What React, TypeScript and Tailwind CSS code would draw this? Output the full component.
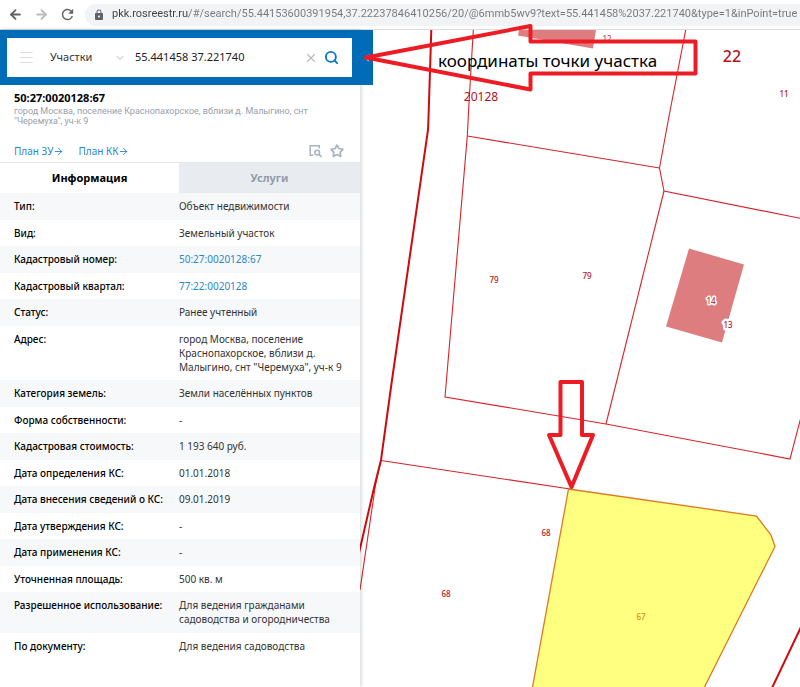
import React, { useState } from 'react';
import { ArrowLeft, ArrowRight, ChevronDown, ChevronLeft, Menu, Search, Star, X } from 'lucide-react';
import { MdLock, MdRefresh } from 'react-icons/md';

interface ParcelField {
  label: string;
  value: string;
  link?: boolean;
}

interface MapLabel {
  x: number;
  y: number;
  text: string;
  className: string;
}

const fields: ParcelField[] = [
  { label: 'Тип:', value: 'Объект недвижимости' },
  { label: 'Вид:', value: 'Земельный участок' },
  { label: 'Кадастровый номер:', value: '50:27:0020128:67', link: true },
  { label: 'Кадастровый квартал:', value: '77:22:0020128', link: true },
  { label: 'Статус:', value: 'Ранее учтенный' },
  { label: 'Адрес:', value: 'город Москва, поселение Краснопахорское, вблизи д. Малыгино, снт "Черемуха", уч-к 9' },
  { label: 'Категория земель:', value: 'Земли населённых пунктов' },
  { label: 'Форма собственности:', value: '-' },
  { label: 'Кадастровая стоимость:', value: '1 193 640 руб.' },
  { label: 'Дата определения КС:', value: '01.01.2018' },
  { label: 'Дата внесения сведений о КС:', value: '09.01.2019' },
  { label: 'Дата утверждения КС:', value: '-' },
  { label: 'Дата применения КС:', value: '-' },
  { label: 'Уточненная площадь:', value: '500 кв. м' },
  { label: 'Разрешенное использование:', value: 'Для ведения гражданами садоводства и огородничества' },
  { label: 'По документу:', value: 'Для ведения садоводства' },
];

const mapLabels: MapLabel[] = [
  { x: 732, y: 62, text: '22', className: 'fill-[#b5121b] text-[16px] font-medium' },
  { x: 481, y: 101, text: '20128', className: 'fill-[#b5121b] text-[12px]' },
  { x: 607, y: 42, text: '12', className: 'fill-[#b5323a] text-[8px]' },
  { x: 784, y: 97, text: '11', className: 'fill-[#b5121b] text-[8px] font-medium' },
  { x: 494, y: 283, text: '79', className: 'fill-[#b5121b] text-[8px] font-medium' },
  { x: 587, y: 279, text: '79', className: 'fill-[#b5121b] text-[8px] font-medium' },
  { x: 711, y: 304, text: '14', className: 'fill-[#b5323a] text-[8px] font-medium' },
  { x: 728, y: 328, text: '13', className: 'fill-[#b5121b] text-[8px] font-medium' },
  { x: 546, y: 536, text: '68', className: 'fill-[#b5121b] text-[8px] font-medium' },
  { x: 446, y: 597, text: '68', className: 'fill-[#b5121b] text-[8px] font-medium' },
  { x: 641, y: 620, text: '67', className: 'fill-[#d98a1c] text-[8px] font-medium' },
];

const PAGE_URL =
  'pkk.rosreestr.ru/#/search/55.44153600391954,37.22237846410256/20/@6mmb5wv9?text=55.441458%2037.221740&type=1&inPoint=true';

const BrowserBar: React.FC = () => (
  <header className="flex h-[30px] items-center overflow-hidden border-b border-[#d9dbdd] bg-white pl-[8px] text-[#5f6368]">
    <button type="button" aria-label="Назад" className="mr-[11px]">
      <ArrowLeft size={15} strokeWidth={3} />
    </button>
    <button type="button" aria-label="Вперёд" className="mr-[10px] text-[#b9bbbe]">
      <ArrowRight size={15} strokeWidth={3} />
    </button>
    <button type="button" aria-label="Обновить" className="mr-[9px]">
      <MdRefresh size={17} />
    </button>
    <div className="flex h-[22px] min-w-0 flex-1 items-center gap-[7px] rounded-l-full bg-[#f1f3f4] pl-[8px]">
      <MdLock size={12} className="shrink-0" />
      <input
        aria-label="Адрес страницы"
        readOnly
        value={PAGE_URL}
        className="min-w-0 flex-1 bg-[linear-gradient(90deg,#3c4043_77px,#74787c_77px)] bg-clip-text font-['Roboto',sans-serif] text-[11px] text-transparent outline-none"
      />
    </div>
  </header>
);

const SearchBar: React.FC = () => {
  const [query, setQuery] = useState('55.441458 37.221740');

  return (
    <div className="relative flex h-[55px] w-[373px] items-center bg-[#006cb7] pl-[7px]">
      <form className="flex h-[39px] w-[345px] items-center bg-white pl-[11px] pr-[13px]" onSubmit={e => e.preventDefault()}>
        <button type="button" aria-label="Меню" className="text-[#c8cbcf]">
          <Menu size={17} strokeWidth={1} />
        </button>
        <div className="relative ml-[15px] flex items-center">
          <select
            aria-label="Слой поиска"
            className="w-[76px] appearance-none bg-transparent text-[11px] text-[#333] outline-none"
          >
            <option>Участки</option>
          </select>
          <ChevronDown size={12} strokeWidth={2} className="pointer-events-none absolute right-0 text-[#b5b9be]" />
        </div>
        <input
          aria-label="Поиск"
          value={query}
          onChange={e => setQuery(e.target.value)}
          className="ml-[9px] min-w-0 flex-1 text-[11px] text-[#222] outline-none"
        />
        <button type="button" aria-label="Очистить" onClick={() => setQuery('')} className="mr-[6px] text-[#b9bdc2]">
          <X size={14} strokeWidth={2} />
        </button>
        <button type="submit" aria-label="Найти" className="text-[#0a75c2]">
          <Search size={15} strokeWidth={3} />
        </button>
      </form>
      <button type="button" aria-label="Свернуть панель" className="ml-auto text-white">
        <ChevronLeft size={12} strokeWidth={2} />
      </button>
    </div>
  );
};

const ParcelSummary: React.FC = () => (
  <section className="flex h-[78px] flex-col border-b border-[#e4e7ea] pl-[14px] pr-[16px] pt-[5px]">
    <h1 className="text-[11px] font-bold leading-[16px] text-black">50:27:0020128:67</h1>
    <p className="w-[300px] font-['Roboto',sans-serif] text-[9px] leading-[10px] text-[#98a1ad]">
      город Москва, поселение Краснопахорское, вблизи д. Малыгино, снт "Черемуха", уч-к 9
    </p>
    <div className="mt-auto flex items-center pb-[4px] text-[10px] leading-[14px] text-[#2a88c9]">
      <a href="#plan-zu" className="mr-[14px] flex items-center">
        План ЗУ <ArrowRight size={11} strokeWidth={2} />
      </a>
      <a href="#plan-kk" className="flex items-center">
        План КК <ArrowRight size={11} strokeWidth={2} />
      </a>
      <button type="button" aria-label="Показать на карте" className="ml-auto mr-[8px] text-[#a9b3c1]">
        <svg width="14" height="14" viewBox="0 0 14 14" fill="none" stroke="currentColor" strokeWidth="1.5">
          <path d="M5.5 11.2H2.2V1.7H11.3V4.5" />
          <circle cx="9.2" cy="8.6" r="2.4" />
          <path d="M11 10.4L13.6 13" />
        </svg>
      </button>
      <button type="button" aria-label="В избранное" className="text-[#a9b3c1]">
        <Star size={14} strokeWidth={3} />
      </button>
    </div>
  </section>
);

const ParcelTable: React.FC = () => (
  <table className="w-full table-fixed border-collapse text-left text-[10px] leading-[14px]">
    <colgroup>
      <col className="w-[179px]" />
      <col />
    </colgroup>
    <tbody>
      {fields.map(field => (
        <tr key={field.label} className="border-[#f6f8fa] odd:border-b odd:bg-[#f6f8fa]">
          <th scope="row" className="whitespace-nowrap py-[6px] pl-[14px] align-top font-medium text-black">
            {field.label}
          </th>
          <td className="py-[6px] pr-[16px] align-top text-[#333]">
            {field.link ? <a href="#parcel" className="text-[#2a88c9]">{field.value}</a> : field.value}
          </td>
        </tr>
      ))}
    </tbody>
  </table>
);

const Sidebar: React.FC = () => {
  const [tab, setTab] = useState<'info' | 'services'>('info');

  return (
    <aside className="relative z-10 w-[360px] shrink-0 bg-white shadow-[1px_0_4px_rgba(0,0,0,0.18)]">
      <SearchBar />
      <ParcelSummary />
      <div role="tablist" className="flex h-[30px] text-[11px] font-bold">
        <button
          type="button"
          role="tab"
          aria-selected={tab === 'info'}
          onClick={() => setTab('info')}
          className={`w-[179px] ${tab === 'info' ? 'bg-white text-black' : 'bg-[#e8ecf1] text-[#919ba9]'}`}
        >
          Информация
        </button>
        <button
          type="button"
          role="tab"
          aria-selected={tab === 'services'}
          onClick={() => setTab('services')}
          className={`flex-1 ${tab === 'services' ? 'bg-white text-black' : 'bg-[#e8ecf1] text-[#919ba9]'}`}
        >
          Услуги
        </button>
      </div>
      {tab === 'info' && <ParcelTable />}
    </aside>
  );
};

const CadastralMap: React.FC = () => (
  <svg
    className="absolute inset-0 h-full w-full"
    viewBox="360 30 440 657"
    preserveAspectRatio="xMinYMin slice"
    role="img"
    aria-label="Кадастровая карта"
  >
    {/* Buildings */}
    <g fill="#de7d7f">
      <path d="M519 30H596L593 48.5L518 35.5Z" />
      <path d="M689 248.5L744 264.5L722 342.5L666 326.5Z" />
    </g>

    {/* Parcel borders */}
    <g fill="none" stroke="#d8232a" strokeWidth="1.1">
      <path d="M473.3 30L469 103L467.3 136L445 397L606 424L790 459L801 417" />
      <path d="M467.3 136L659.5 168" />
      <path d="M685.7 30L668.3 120L659.5 168L664 191L801 218.5" />
      <path d="M664 191L606 424" />
      <path d="M381 460.5L570 489" />
      <path d="M381 460.5L375.5 485L360 590" />
    </g>

    {/* Quarter borders */}
    <g fill="none" stroke="#cf0a0f" strokeWidth="2">
      <path d="M431.3 30L428.5 118L428 130L392 380L381 460L374 488L359 553" />
      <path d="M801 627L772 688" />
    </g>

    {/* Selected parcel */}
    <path
      d="M568.5 489L756.5 516L771 535L775 546.5L703 690H532Z"
      fill="#ffff80"
      stroke="#de7a20"
      strokeWidth="1.3"
    />

    {mapLabels.map(label => (
      <text
        key={`${label.x}-${label.y}`}
        x={label.x}
        y={label.y}
        textAnchor="middle"
        stroke={label.text === '13' || label.text === '14' ? '#fff' : 'none'}
        strokeWidth={label.text === '13' ? '5' : '3'}
        strokeLinejoin="round"
        paintOrder="stroke"
        className={label.className}
      >
        {label.text}
      </text>
    ))}
  </svg>
);

const Annotations: React.FC = () => (
  <svg
    className="pointer-events-none absolute inset-0 z-20 h-full w-full overflow-visible"
    viewBox="360 30 440 657"
    preserveAspectRatio="xMinYMin slice"
  >
    <g fill="none" stroke="#ed1c24" strokeWidth="4" strokeLinejoin="round">
      <path d="M366 57.5L530.5 26V41.5H695.5V73.5H530.5V89.5Z" />
      <path d="M560.5 382H582V435H593L571.5 487L549 435H560.5Z" />
    </g>
    <text x="438" y="67" className="fill-black text-[17px]">
      координаты точки участка
    </text>
  </svg>
);

const App: React.FC = () => (
  <div className="flex min-h-screen flex-col overflow-x-hidden bg-white font-['Noto_Sans','Open_Sans',sans-serif]">
    <BrowserBar />
    <div className="flex flex-1">
      <Sidebar />
      <main className="relative min-w-0 flex-1">
        <CadastralMap />
        <Annotations />
      </main>
    </div>
  </div>
);

export default App;
